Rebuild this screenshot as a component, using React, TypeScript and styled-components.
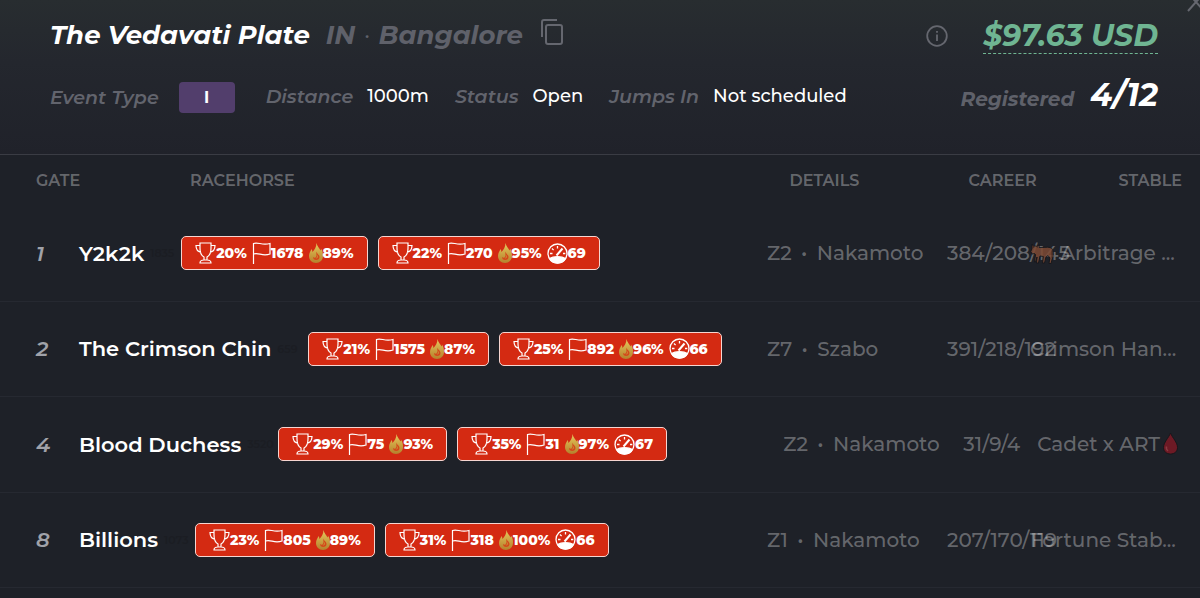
import React from "react";
import styled, { createGlobalStyle } from "styled-components";

const muted = "rgba(255, 255, 255, 0.32)";

const Global = createGlobalStyle`
  * { box-sizing: border-box; }
  body { margin: 0; background: #1e2128; font-family: Montserrat, Inter, sans-serif; color: #fff; }
`;

const Panel = styled.main`
  position: relative;
  overflow: hidden;
  background: #1e2128;
`;

const Header = styled.header`
  display: flex;
  justify-content: space-between;
  min-height: 155px;
  padding: 17px 42px 0 50px;
  background: linear-gradient(#282d30, #24272e 40%, #20222a);
  border-bottom: 1px solid #3a3c44;
`;

const Summary = styled.div`
  display: flex;
  flex-direction: column;
  gap: 29px;
`;

const TitleRow = styled.div`
  display: flex;
  align-items: center;
  height: 36px;
  gap: 16px;
`;

const Title = styled.h1`
  margin: 0;
  font-size: 26px;
  font-weight: 700;
  font-style: italic;
  white-space: nowrap;
`;

const Place = styled.span`
  color: #5f616a;
  font-size: 26px;
  font-weight: 700;
  font-style: italic;
  white-space: nowrap;
`;

const Separator = styled.span`
  margin: 0 1px;
  font-weight: 400;
`;

const IconButton = styled.button`
  display: flex;
  padding: 0;
  border: 0;
  background: none;
  color: #65676f;
  cursor: pointer;
`;

const CopyButton = styled(IconButton)`
  align-self: flex-start;
  padding: 2px;
`;

const Close = styled(IconButton)`
  position: absolute;
  top: -8px;
  right: -7px;
`;

const Facts = styled.dl`
  display: flex;
  align-items: flex-start;
  gap: 26px;
  height: 31px;
  margin: 0;
`;

const Fact = styled.div`
  display: flex;
  align-items: center;
  gap: 14px;
  min-height: 28px;
  white-space: nowrap;
`;

const EventFact = styled(Fact)`
  gap: 20px;
  margin-right: 5px;
`;

const Label = styled.dt`
  color: #62646d;
  font-size: 19px;
  font-weight: 600;
  font-style: italic;
`;

const Value = styled.dd`
  margin: 0;
  font-size: 18px;
  font-weight: 500;
`;

const Tag = styled.span`
  display: flex;
  align-items: center;
  justify-content: center;
  width: 56px;
  height: 31px;
  border-radius: 4px;
  background: #523e6c;
  font-size: 16px;
  font-weight: 700;
`;

const Totals = styled.div`
  display: flex;
  flex-direction: column;
  align-items: flex-end;
  gap: 21px;
`;

const PriceRow = styled.div`
  display: flex;
  align-items: center;
  gap: 35px;
`;

const Price = styled.strong`
  height: 37px;
  border-bottom: 1px dashed #6fb592;
  color: #6fb592;
  font-size: 30px;
  line-height: 37px;
  font-weight: 700;
  font-style: italic;
  white-space: nowrap;
`;

const Registered = styled.div`
  display: flex;
  align-items: baseline;
  gap: 16px;
  color: #5f616a;
  font-size: 20px;
  font-weight: 700;
  font-style: italic;
`;

const Count = styled.strong`
  color: #fff;
  font-size: 32px;
  font-weight: 700;
`;

const Table = styled.table`
  display: block;
  width: 100%;
`;

const Head = styled.thead`
  display: block;
`;

const Body = styled.tbody`
  display: grid;
  grid-auto-rows: 1fr;
  min-height: 382px;
`;

const HeadRow = styled.tr`
  display: grid;
  grid-template-columns: 154px minmax(0, 1fr) 179px 150px auto;
  align-items: center;
  height: 51px;
  padding: 0 18px 0 36px;
`;

const HeadCell = styled.th`
  padding: 0;
  color: ${muted};
  font-size: 16px;
  font-weight: 600;
  text-align: left;
`;

const Row = styled.tr`
  display: grid;
  grid-template-columns: 43px minmax(0, 1fr) 180px fit-content(83px) fit-content(150px);
  align-items: center;
  padding: 0 20px 0 36px;
  border-bottom: 1px solid #262931;
`;

const Cell = styled.td`
  min-width: 0;
  padding: 0;
  color: ${muted};
  font-size: 20px;
  font-weight: 500;
  white-space: nowrap;
`;

const Gate = styled(Cell)`
  color: #a0a2a9;
  font-size: 21px;
  font-weight: 600;
  font-style: italic;
`;

const Horse = styled(Cell)`
  display: flex;
  align-items: center;
  color: #fff;
  font-size: 21px;
  font-weight: 600;
`;

const Career = styled(Cell)`
  padding-right: 17px;
`;

const Stable = styled(Cell)<{ $full?: boolean }>`
  display: flex;
  align-items: center;
  gap: 1px;
  width: ${(p) => (p.$full ? "150px" : "auto")};
`;

const Dot = styled.span`
  margin: 0 4px;
`;

const Serial = styled.small`
  width: 37px;
  padding-left: 6px;
  color: #1b1d23;
  font-size: 11px;
`;

const Badge = styled.span`
  display: flex;
  align-items: center;
  gap: 5px;
  height: 34px;
  margin-right: 10px;
  padding: 0 13px;
  border: 1px solid #f6d5d0;
  border-radius: 5px;
  background: #d42a12;
  font-size: 14px;
  font-weight: 800;
`;

const Stat = styled.span`
  display: flex;
  align-items: center;
`;

const Trophy = () => (
  <svg width="21" height="22" viewBox="0 0 21 22" fill="none" stroke="#fff" strokeWidth="1.2">
    <path d="M5 1h11v5c0 5-2 8-4 9v3h-3v-3c-2-1-4-4-4-9z M5 3.500H1c0 4 1 6 5 7 M16 3.500h4c0 4-1 6-5 7 M5 21c0-2 1-3 4-3h3c3 0 4 1 4 3z" />
  </svg>
);

const Flag = () => (
  <svg width="19" height="22" viewBox="0 0 19 22" fill="none" stroke="#fff" strokeWidth="1.2">
    <path d="M1.500 22V1.500c5-2 8 2.500 16.500 0v10.500c-8 3-11-2-16.500 0" />
  </svg>
);

const Flame = () => (
  <svg width="14" height="20" viewBox="0 0 14 20">
    <defs>
      <linearGradient id="flame" x1="0" y1="0" x2="0" y2="1">
        <stop offset="0" stopColor="#e6c95c" />
        <stop offset="1" stopColor="#b5802c" />
      </linearGradient>
    </defs>
    <path fill="url(#flame)" d="M7.500 0c.3 3 3 5 4 7.500.5-.6.500-1.400.4-2C14 8 14 11 14 13c0 4-3 7-7 7s-7-3-7-7c0-3 1.500-4.500 2.500-7 .7 1 .9 2 .9 3C5.500 7 7.500 4 7.500 0z" />
    <path fill="#d4481a" d="M7.500 8.500c.3 2.500 3 3 3 5.500 0 2-1.500 3-3.300 3S4 15.800 4 14c.8.7 1.700.9 2.500.4C8 13.300 7 11 7.500 8.500z" />
    <path fill="#c9983a" d="M7 11c1.300 1.500 1.500 3-.2 4.500 1.800 0 2.400-1.300 1.700-3z" />
  </svg>
);

const Gauge = () => (
  <svg width="21" height="21" viewBox="0 0 21 21" fill="none" stroke="#fff" strokeWidth="1.300">
    <circle cx="10.500" cy="10.500" r="9.500" />
    <path fill="#fff" d="M2.500 15.500c4-2.500 12-2.500 16 0-1.500 3-4.500 4.500-8 4.500s-6.500-1.500-8-4.500z" />
    <path d="M10.500 3v2.500M5 5.500l1.600 1.600M3 10.500h2.500M16 10.500h2.300" />
    <path strokeWidth="2" d="M9.500 12.500L15.500 5.500" />
  </svg>
);

const Bull = () => (
  <svg width="24" height="23" viewBox="0 0 24 23" opacity="0.85">
    <path fill="#7d4a34" stroke="#17171b" strokeWidth="1" strokeLinejoin="round" d="M2 2l1.500 2.500C4.500 3.800 6 3.800 7 4.500L9.500 2.500 9 5.500c4 .3 8-.8 11 0 2.500.8 3 2.500 3 5 0 1.500.3 4-.5 5.500L21 21.500h-2l.8-5.500-1.800-2.500-2 1.500-1.500 6h-2l.8-6.500-3.300-.5-1.500 7h-2l.5-6-1.500 5H4.500l1-7.500L4.500 11.500 2 12 .8 9.500 2 6.500z" />
    <path fill="#4b2a1e" d="M3 3l1.500 2.500-2 .5zM8.500 4L7.500 6l-1-1zM21.500 7c1 3 .5 6 1 9l-1-.5z" />
  </svg>
);

const Drop = () => (
  <svg width="19" height="24" viewBox="0 0 18 24">
    <path fill="#6d1a25" stroke="#17171b" strokeWidth="1" d="M9 1c2 5 7 9.500 7 14.500 0 4-3 6.500-7 6.500s-7-2.500-7-6.500C2 10.500 7 6 9 1z" />
    <path fill="none" stroke="#8b3a42" strokeWidth="1.500" d="M5 14.500c-.5 2 .3 3.500 1.500 4.300" />
  </svg>
);

type Stats = [string, string, string, string?];
interface Entry {
  gate: string;
  name: string;
  serial: string;
  badges: Stats[];
  tier: string;
  bloodline: string;
  career: string;
  stable: React.ReactNode;
  fullStable?: boolean;
}

const entries: Entry[] = [
  { gate: "1", name: "Y2k2k", serial: "1835", badges: [["20%", "1678", "89%"], ["22%", "270", "95%", "69"]], tier: "Z2", bloodline: "Nakamoto", career: "384/208/145", stable: <><Bull />&nbsp;Arbitrage ...</>, fullStable: true },
  { gate: "2", name: "The Crimson Chin", serial: "659", badges: [["21%", "1575", "87%"], ["25%", "892", "96%", "66"]], tier: "Z7", bloodline: "Szabo", career: "391/218/192", stable: "Crimson Han...", fullStable: true },
  { gate: "4", name: "Blood Duchess", serial: "3520", badges: [["29%", "75", "93%"], ["35%", "31", "97%", "67"]], tier: "Z2", bloodline: "Nakamoto", career: "31/9/4", stable: <>Cadet x ART<Drop /></> },
  { gate: "8", name: "Billions", serial: "1073", badges: [["23%", "805", "89%"], ["31%", "318", "100%", "66"]], tier: "Z1", bloodline: "Nakamoto", career: "207/170/119", stable: "Fortune Stab...", fullStable: true },
];

const StatBadge = ({ stats: [wins, races, heat, speed] }: { stats: Stats }) => (
  <Badge>
    <Stat><Trophy />{wins}</Stat>
    <Stat><Flag />{races}</Stat>
    <Stat><Flame />{heat}</Stat>
    {speed && <Stat><Gauge />{speed}</Stat>}
  </Badge>
);

export default function App() {
  return (
    <>
      <Global />
      <Panel>
        <Header>
          <Summary>
            <TitleRow>
              <Title>The Vedavati Plate</Title>
              <Place>IN <Separator>·</Separator> Bangalore</Place>
              <CopyButton aria-label="Copy race link">
                <svg width="22" height="26" viewBox="0 0 22 26" fill="none" stroke="currentColor" strokeWidth="2">
                  <path d="M1 18V3q0-2 2-2h13" />
                  <rect x="5" y="6" width="16" height="19" rx="2" />
                </svg>
              </CopyButton>
            </TitleRow>
            <Facts>
              <EventFact><Label>Event Type</Label><Value><Tag>I</Tag></Value></EventFact>
              <Fact><Label>Distance</Label><Value>1000m</Value></Fact>
              <Fact><Label>Status</Label><Value>Open</Value></Fact>
              <Fact><Label>Jumps In</Label><Value>Not scheduled</Value></Fact>
            </Facts>
          </Summary>
          <Totals>
            <PriceRow>
              <IconButton aria-label="Prize information">
                <svg width="22" height="22" viewBox="0 0 22 22" fill="none" stroke="currentColor" strokeWidth="1.800">
                  <circle cx="11" cy="11" r="9.800" />
                  <path d="M11 9.500V16M11 6v1.800" />
                </svg>
              </IconButton>
              <Price>$97.63 USD</Price>
            </PriceRow>
            <Registered>Registered <Count>4/12</Count></Registered>
          </Totals>
          <Close aria-label="Close">
            <svg width="20" height="20" viewBox="0 0 20 20" fill="none" stroke="currentColor" strokeWidth="2">
              <path d="M1 1l16 18M17 1L1 19" />
            </svg>
          </Close>
        </Header>
        <Table>
          <Head>
            <HeadRow>
              <HeadCell>GATE</HeadCell>
              <HeadCell>RACEHORSE</HeadCell>
              <HeadCell>DETAILS</HeadCell>
              <HeadCell>CAREER</HeadCell>
              <HeadCell>STABLE</HeadCell>
            </HeadRow>
          </Head>
          <Body>
            {entries.map((e) => (
              <Row key={e.gate}>
                <Gate>{e.gate}</Gate>
                <Horse>
                  {e.name}
                  <Serial>{e.serial}</Serial>
                  {e.badges.map((b, i) => <StatBadge key={i} stats={b} />)}
                </Horse>
                <Cell>{e.tier} <Dot>•</Dot> {e.bloodline}</Cell>
                <Career>{e.career}</Career>
                <Stable $full={e.fullStable}>{e.stable}</Stable>
              </Row>
            ))}
          </Body>
        </Table>
      </Panel>
    </>
  );
}
